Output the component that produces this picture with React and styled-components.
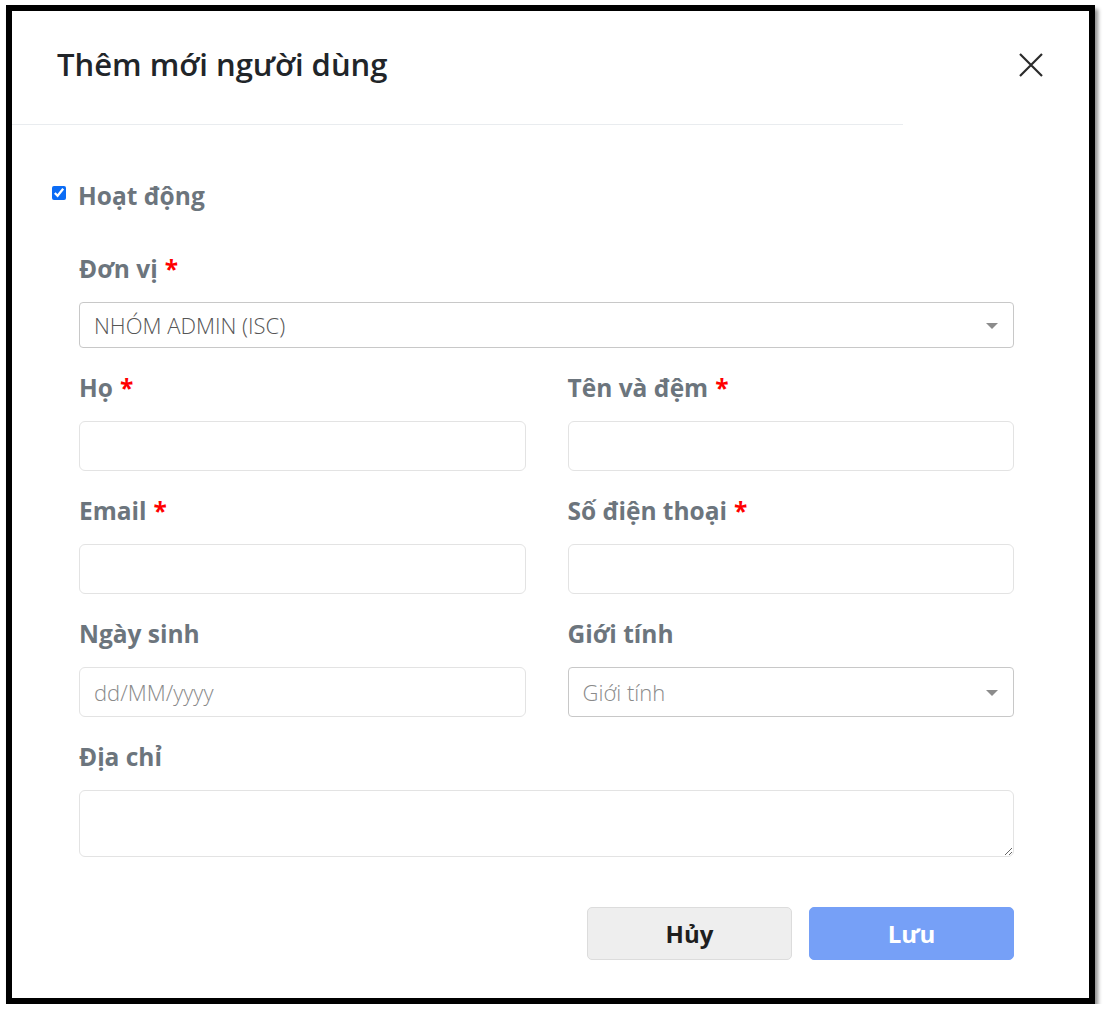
import React from "react";
import styled, { createGlobalStyle } from "styled-components";

const Global = createGlobalStyle`
  html, body { margin: 0; padding: 0; background: #fff; }
  body { font-family: "Open Sans", "Noto Sans", sans-serif; }
  * { box-sizing: border-box; }
`;

const Frame = styled.div`
  margin: 5px 0 0 6px;
  width: 1089px;
  height: 999px;
  border: 6px solid #000;
  background: #fff;
  box-shadow: 3px 4px 4px rgba(0, 0, 0, 0.45);
  display: flex;
  flex-direction: column;
`;

const Header = styled.div`
  height: 113px;
  display: flex;
  align-items: center;
  justify-content: space-between;
  padding: 0 46px 6px 45px;
`;

const Title = styled.h2`
  margin: 0;
  font-size: 31px;
  font-weight: 600;
  color: #212529;
  line-height: 1.2;
`;

const CloseButton = styled.button`
  border: 0;
  background: transparent;
  padding: 0;
  width: 24px;
  height: 24px;
  display: flex;
  cursor: pointer;
`;

const Divider = styled.div`
  width: 891px;
  height: 1px;
  background: #e9ecef;
`;

const Body = styled.div`
  flex: 1;
  display: flex;
  flex-direction: column;
  padding: 56px 75px 38px 67px;
`;

const CheckRow = styled.label`
  display: flex;
  align-items: center;
  gap: 12px;
  margin-left: -27px;
  height: 30px;
  margin-bottom: 43px;
`;

const Check = styled.input`
  width: 14px;
  height: 14px;
  margin: 0 0 6px 0;
  accent-color: #0b6cf5;
`;

const Label = styled.div`
  font-size: 24.5px;
  font-weight: 700;
  color: #6c757d;
  line-height: 30px;
  height: 30px;
  white-space: nowrap;
`;

const Required = styled.span`
  color: #f00;
  margin-left: 7px;
`;

const Field = styled.div`
  display: flex;
  flex-direction: column;
  gap: 18px;
  margin-top: ${(p) => p.$mt || 0}px;
`;

const Grid = styled.div`
  display: grid;
  grid-template-columns: 1fr 1fr;
  column-gap: 42px;
  row-gap: 25px;
  margin-top: 25px;
`;

const TextInput = styled.input`
  width: 100%;
  height: 50px;
  border: 1px solid #e3e3e3;
  border-radius: 6px;
  padding: 0 14px;
  font-family: "Open Sans", sans-serif;
  font-size: 22px;
  font-weight: 300;
  color: #555;
  outline: none;
  &::placeholder { color: #8a8a8a; }
`;

const SelectBox = styled.div`
  position: relative;
  height: ${(p) => p.$h || 46}px;
  border: 1px solid #c8c8c8;
  border-radius: 4px;
  padding: 0 40px 0 14px;
  display: flex;
  align-items: center;
  font-size: 22px;
  font-weight: 300;
  color: ${(p) => (p.$placeholder ? "#8a8a8a" : "#555")};
`;

const Caret = styled.span`
  position: absolute;
  right: 15px;
  top: 50%;
  margin-top: -2px;
  width: 0;
  height: 0;
  border-left: 6px solid transparent;
  border-right: 6px solid transparent;
  border-top: 6px solid #8c8c8c;
`;

const TextArea = styled.textarea`
  width: 100%;
  height: 67px;
  border: 1px solid #e3e3e3;
  border-radius: 6px;
  padding: 10px 14px;
  font-family: "Open Sans", sans-serif;
  font-size: 22px;
  outline: none;
  resize: vertical;
  display: block;
`;

const Footer = styled.div`
  margin-top: auto;
  display: flex;
  justify-content: flex-end;
  gap: 17px;
`;

const Button = styled.button`
  width: 205px;
  height: 53px;
  border-radius: 5px;
  font-family: "Open Sans", sans-serif;
  font-size: 24px;
  font-weight: 700;
  border: 1px solid ${(p) => (p.$primary ? "#76a0f7" : "#dcdcdc")};
  background: ${(p) => (p.$primary ? "#76a0f7" : "#eeeeee")};
  color: ${(p) => (p.$primary ? "#fff" : "#1e1e1e")};
  cursor: pointer;
`;

export default function App() {
  return (
    <>
      <Global />
      <Frame>
        <Header>
          <Title>Thêm mới người dùng</Title>
          <CloseButton aria-label="Đóng">
            <svg width="24" height="24" viewBox="0 0 24 24">
              <path d="M1 1 L23 23 M23 1 L1 23" stroke="#2b2b2b" strokeWidth="2.2" fill="none" />
            </svg>
          </CloseButton>
        </Header>
        <Divider />
        <Body>
          <CheckRow>
            <Check type="checkbox" defaultChecked />
            <Label>Hoạt động</Label>
          </CheckRow>
          <Field>
            <Label>
              Đơn vị<Required>*</Required>
            </Label>
            <SelectBox>
              NHÓM ADMIN (ISC)
              <Caret />
            </SelectBox>
          </Field>
          <Grid>
            <Field>
              <Label>
                Họ<Required>*</Required>
              </Label>
              <TextInput />
            </Field>
            <Field>
              <Label>
                Tên và đệm<Required>*</Required>
              </Label>
              <TextInput />
            </Field>
            <Field>
              <Label>
                Email<Required>*</Required>
              </Label>
              <TextInput />
            </Field>
            <Field>
              <Label>
                Số điện thoại<Required>*</Required>
              </Label>
              <TextInput />
            </Field>
            <Field>
              <Label>Ngày sinh</Label>
              <TextInput placeholder="dd/MM/yyyy" />
            </Field>
            <Field>
              <Label>Giới tính</Label>
              <SelectBox $h={50} $placeholder>
                Giới tính
                <Caret />
              </SelectBox>
            </Field>
          </Grid>
          <Field $mt={25}>
            <Label>Địa chỉ</Label>
            <TextArea />
          </Field>
          <Footer>
            <Button>Hủy</Button>
            <Button $primary>Lưu</Button>
          </Footer>
        </Body>
      </Frame>
    </>
  );
}
